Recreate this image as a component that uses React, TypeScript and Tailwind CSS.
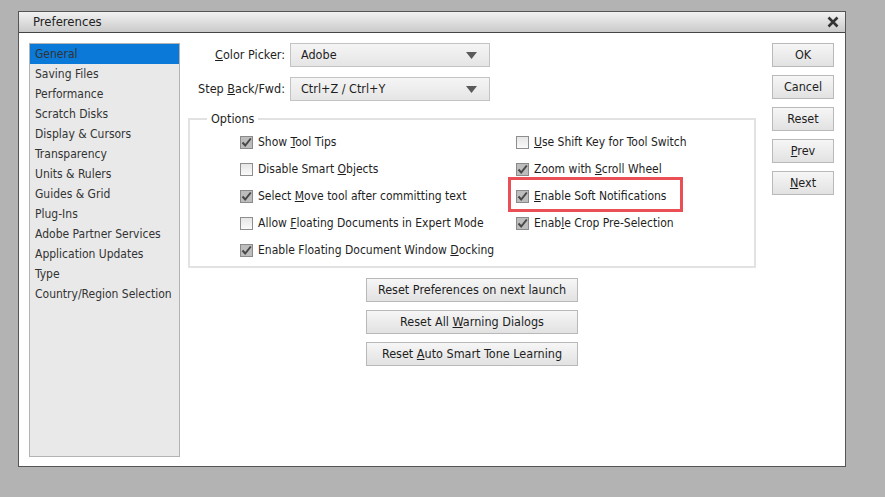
import React from "react";

const font = { fontFamily: "'DejaVu Sans Condensed', 'Liberation Sans', sans-serif" };

const categories = [
  "General",
  "Saving Files",
  "Performance",
  "Scratch Disks",
  "Display & Cursors",
  "Transparency",
  "Units & Rulers",
  "Guides & Grid",
  "Plug-Ins",
  "Adobe Partner Services",
  "Application Updates",
  "Type",
  "Country/Region Selection",
];

function Check({ checked }: { checked: boolean }) {
  if (checked) {
    return (
      <span className="flex h-[13px] w-[13px] shrink-0 items-center justify-center border border-[#8a8a8a] bg-[#bdbdbd]">
        <svg width="11" height="11" viewBox="0 0 11 11">
          <path d="M1.5 5.5 L4.2 8.5 L9.8 1.5" fill="none" stroke="#474747" strokeWidth="2" />
        </svg>
      </span>
    );
  }
  return <span className="h-[13px] w-[13px] shrink-0 border border-[#8e8e8e] bg-gradient-to-b from-[#e6e6e6] to-[#fafafa]" />;
}

function Option({ checked, children, flagged }: { checked: boolean; children: React.ReactNode; flagged?: boolean }) {
  return (
    <div className="relative flex h-[27px] items-center gap-[5px] whitespace-nowrap">
      <Check checked={checked} />
      <span>{children}</span>
      {flagged && <span className="pointer-events-none absolute -left-[8px] -top-[6px] h-[35px] w-[175px] border-[3px] border-[#ea4f55]" />}
    </div>
  );
}

function Btn({ children, className = "" }: { children: React.ReactNode; className?: string }) {
  return (
    <div className={`flex h-[24px] items-center justify-center border border-[#b9b9b9] bg-gradient-to-b from-[#f6f6f6] to-[#e2e2e2] text-[12.5px] text-[#1e1e1e] ${className}`}>
      <span className="whitespace-pre">{children}</span>
    </div>
  );
}

function Select({ value }: { value: string }) {
  return (
    <div className="flex h-[24px] w-[200px] items-center justify-between border border-[#c3c3c3] bg-gradient-to-b from-[#f5f5f5] to-[#e5e5e5] pl-[10px] pr-[12px] text-[12.5px]">
      <span>{value}</span>
      <svg width="11" height="7" viewBox="0 0 11 7">
        <path d="M0 0 H11 L5.5 7 Z" fill="#5a5a5a" />
      </svg>
    </div>
  );
}

export default function App() {
  return (
    <div className="h-[497px] w-[885px] bg-[#b3b3b3] pl-[18px] pt-[11px]" style={font}>
      <div className="flex h-[456px] w-[828px] flex-col border border-[#555] bg-white text-[#1e1e1e]">
        <div className="flex h-[21px] shrink-0 items-center justify-between border-b border-[#444] bg-gradient-to-b from-[#f2f2f2] to-[#cacaca] pl-[14px] pr-[6px]">
          <span className="text-[13px] text-[#222]">Preferences</span>
          <svg width="12" height="12" viewBox="0 0 12 12">
            <path d="M1.5 1.5 L10.5 10.5 M10.5 1.5 L1.5 10.5" stroke="#333" strokeWidth="2.6" />
          </svg>
        </div>

        <div className="flex flex-1 gap-[8px] pb-[9px] pl-[10px] pt-[10px]">
          <div className="w-[151px] border border-[#b3b3b3] bg-[#e9e9e9] text-[12px] text-[#333]">
            {categories.map((c, i) => (
              <div key={c} className={`flex h-[20px] items-center whitespace-nowrap pl-[5px] ${i === 0 ? "bg-[#0a79d8]" : ""}`}>
                {c}
              </div>
            ))}
          </div>

          <div className="flex w-[568px] flex-col text-[12px]">
            <div className="flex items-center gap-[5px]">
              <span className="w-[97px] text-right text-[12.5px]">
                <u>C</u>olor Picker:
              </span>
              <Select value="Adobe" />
            </div>
            <div className="mt-[10px] flex items-center gap-[5px]">
              <span className="w-[97px] text-right text-[12.5px]">
                Step <u>B</u>ack/Fwd:
              </span>
              <Select value="Ctrl+Z / Ctrl+Y" />
            </div>

            <fieldset className="mt-[9px] h-[158px] border-2 border-[#e2e2e2] px-0 pb-[2px] pt-0">
              <legend className="ml-[17px] px-[4px] text-[12.5px]">Options</legend>
              <div className="grid grid-cols-[276px_1fr] pl-[50px]">
                <Option checked>Show <u>T</u>ool Tips</Option>
                <Option checked={false}><u>U</u>se Shift Key for Tool Switch</Option>
                <Option checked={false}>Disable Smart <u>O</u>bjects</Option>
                <Option checked>Zoom with <u>S</u>croll Wheel</Option>
                <Option checked>Select <u>M</u>ove tool after committing text</Option>
                <Option checked flagged><u>E</u>nable Soft Notifications</Option>
                <Option checked={false}>Allow <u>F</u>loating Documents in Expert Mode</Option>
                <Option checked>Enab<u>l</u>e Crop Pre-Selection</Option>
                <Option checked>Enable Floating Document Window <u>D</u>ocking</Option>
              </div>
            </fieldset>

            <div className="ml-[178px] mt-[10px] flex w-[212px] flex-col gap-[8px]">
              <Btn>Reset Preferences on next launch</Btn>
              <Btn>Reset All <u>W</u>arning Dialogs</Btn>
              <Btn>Reset <u>A</u>uto Smart Tone Learning</Btn>
            </div>
          </div>

          <div className="ml-[8px] flex w-[62px] flex-col gap-[8px]">
            <Btn>OK</Btn>
            <Btn>Cancel</Btn>
            <Btn>Reset</Btn>
            <Btn><u>P</u>rev</Btn>
            <Btn><u>N</u>ext</Btn>
          </div>
        </div>
      </div>
    </div>
  );
}
